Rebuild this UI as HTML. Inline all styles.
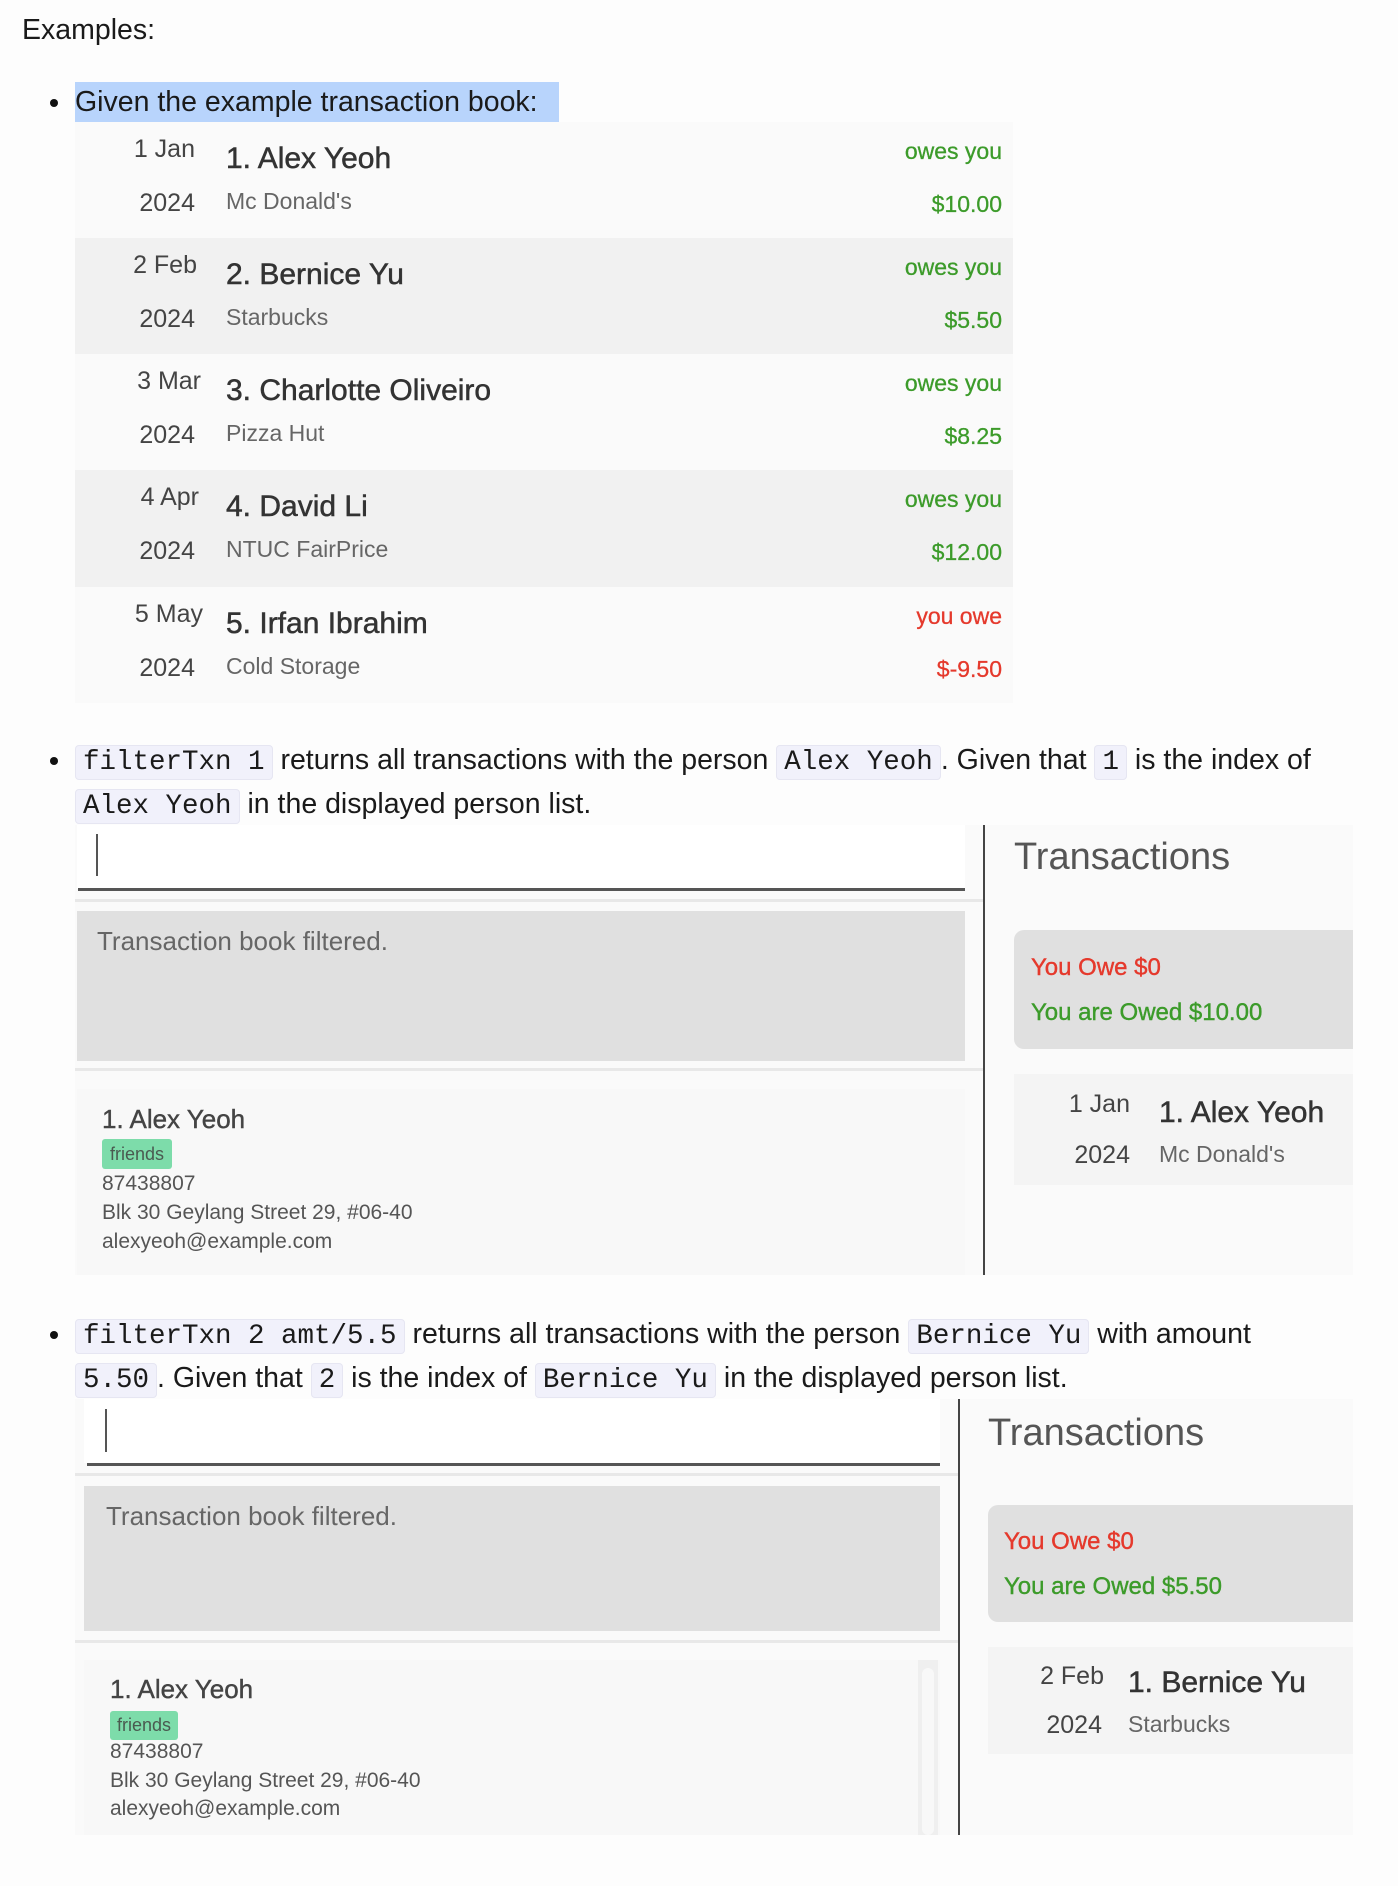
<!DOCTYPE html>
<html><head><meta charset="utf-8"><style>
*{margin:0;padding:0;box-sizing:border-box}
body{width:1398px;height:1886px;background:#fdfdfd;position:relative;font-family:"Liberation Sans",sans-serif;color:#1a1a1a;overflow:hidden}
.a{position:absolute;white-space:nowrap}
.p{font-size:28.5px;line-height:44px}
code{font-family:"Liberation Mono",monospace;font-size:27.5px;background:#f1f1fb;border:1px solid #e6e6f2;border-radius:4px;padding:1px 7px}
.dot{position:absolute;width:8px;height:8px;border-radius:50%;background:#111}
.g{color:#3c9b2a}.r{color:#e5392c}
.dt{position:absolute;right:0;width:120px;text-align:right;font-size:25px;color:#444}
.nm{font-size:30px;color:#333;-webkit-text-stroke:0.5px #333}
.ds{font-size:23px;color:#666}
.am{font-size:23px;-webkit-text-stroke:0.3px currentColor}
.pan{position:absolute;background:#fafafa}
.gb{position:absolute;background:#e0e0e0}
.ln{position:absolute;height:3px;background:#e8e8e8}
.tag{position:absolute;background:#7ddcaa;border-radius:3px;font-size:18px;color:#4a5a50;text-align:center}
.pi{font-size:21px;color:#555}
</style></head><body>
<div class="a p" style="left:22px;top:8px">Examples:</div>

<div class="dot" style="left:50px;top:99px"></div>
<div class="a" style="left:75px;top:82px;width:484px;height:40px;background:#b8d4fc"></div>
<div class="a p" style="left:75px;top:80px">Given the example transaction book:</div>

<div class="a" style="left:75px;top:122px;width:938px;height:581px;background:#fafafa"></div>
<div class="a" style="left:75px;top:238px;width:938px;height:116px;background:#f1f1f1"></div>
<div class="a" style="left:75px;top:470px;width:938px;height:117px;background:#f1f1f1"></div>

<div class="a dt" style="left:75px;width:120px;top:135px">1 Jan</div><div class="a dt" style="left:75px;width:120px;top:189px">2024</div>
<div class="a nm" style="left:226px;top:142px">1. Alex Yeoh</div><div class="a ds" style="left:226px;top:188px">Mc Donald's</div>
<div class="a am g" style="right:396px;top:138px">owes you</div><div class="a am g" style="right:396px;top:191px">$10.00</div>

<div class="a dt" style="left:75px;width:122px;top:251px">2 Feb</div><div class="a dt" style="left:75px;width:120px;top:305px">2024</div>
<div class="a nm" style="left:226px;top:258px">2. Bernice Yu</div><div class="a ds" style="left:226px;top:304px">Starbucks</div>
<div class="a am g" style="right:396px;top:254px">owes you</div><div class="a am g" style="right:396px;top:307px">$5.50</div>

<div class="a dt" style="left:75px;width:126px;top:367px">3 Mar</div><div class="a dt" style="left:75px;width:120px;top:421px">2024</div>
<div class="a nm" style="left:226px;top:374px">3. Charlotte Oliveiro</div><div class="a ds" style="left:226px;top:420px">Pizza Hut</div>
<div class="a am g" style="right:396px;top:370px">owes you</div><div class="a am g" style="right:396px;top:423px">$8.25</div>

<div class="a dt" style="left:75px;width:124px;top:483px">4 Apr</div><div class="a dt" style="left:75px;width:120px;top:537px">2024</div>
<div class="a nm" style="left:226px;top:490px">4. David Li</div><div class="a ds" style="left:226px;top:536px">NTUC FairPrice</div>
<div class="a am g" style="right:396px;top:486px">owes you</div><div class="a am g" style="right:396px;top:539px">$12.00</div>

<div class="a dt" style="left:75px;width:128px;top:600px">5 May</div><div class="a dt" style="left:75px;width:120px;top:654px">2024</div>
<div class="a nm" style="left:226px;top:607px">5. Irfan Ibrahim</div><div class="a ds" style="left:226px;top:653px">Cold Storage</div>
<div class="a am r" style="right:396px;top:603px">you owe</div><div class="a am r" style="right:396px;top:656px">$-9.50</div>

<div class="dot" style="left:50px;top:757px"></div>
<div class="a p" style="left:75px;top:738px"><code>filterTxn 1</code> returns all transactions with the person <code>Alex Yeoh</code>. Given that <code>1</code> is the index of</div>
<div class="a p" style="left:75px;top:782px"><code>Alex Yeoh</code> in the displayed person list.</div>

<div class="pan" style="left:75px;top:825px;width:1278px;height:450px"></div>
<div class="a" style="left:77px;top:825px;width:888px;height:64px;background:#fff"></div>
<div class="a" style="left:96px;top:834px;width:2px;height:42px;background:#555"></div>
<div class="a" style="left:78px;top:888px;width:887px;height:3px;background:#555"></div>
<div class="ln" style="left:75px;top:899px;width:910px"></div>
<div class="gb" style="left:77px;top:911px;width:888px;height:150px"></div>
<div class="a" style="left:97px;top:926px;font-size:26px;color:#666">Transaction book filtered.</div>
<div class="ln" style="left:75px;top:1068px;width:910px"></div>
<div class="a" style="left:77px;top:1089px;width:888px;height:186px;background:#f8f8f8"></div>
<div class="a" style="left:102px;top:1104px;font-size:26px;color:#444;-webkit-text-stroke:0.4px #444">1. Alex Yeoh</div>
<div class="tag" style="left:102px;top:1139px;width:70px;height:30px;line-height:30px">friends</div>
<div class="a pi" style="left:102px;top:1172px">87438807</div>
<div class="a pi" style="left:102px;top:1201px">Blk 30 Geylang Street 29, #06-40</div>
<div class="a pi" style="left:102px;top:1230px">alexyeoh@example.com</div>
<div class="a" style="left:983px;top:825px;width:2px;height:450px;background:#444"></div>
<div class="a" style="left:1014px;top:836px;font-size:38px;color:#555;font-weight:300">Transactions</div>
<div class="gb" style="left:1014px;top:930px;width:339px;height:119px;border-radius:10px 0 0 10px"></div>
<div class="a r" style="left:1031px;top:954px;font-size:24px;-webkit-text-stroke:0.4px currentColor">You Owe $0</div>
<div class="a g" style="left:1031px;top:999px;font-size:24px;-webkit-text-stroke:0.4px currentColor">You are Owed $10.00</div>
<div class="a" style="left:1014px;top:1074px;width:339px;height:111px;background:#f4f4f4"></div>
<div class="a dt" style="left:1010px;width:120px;top:1090px">1 Jan</div><div class="a dt" style="left:1010px;width:120px;top:1141px">2024</div>
<div class="a nm" style="left:1159px;top:1096px">1. Alex Yeoh</div><div class="a ds" style="left:1159px;top:1141px">Mc Donald's</div>

<div class="dot" style="left:50px;top:1331px"></div>
<div class="a p" style="left:75px;top:1312px"><code>filterTxn 2 amt/5.5</code> returns all transactions with the person <code>Bernice Yu</code> with amount</div>
<div class="a p" style="left:75px;top:1356px"><code>5.50</code>. Given that <code>2</code> is the index of <code>Bernice Yu</code> in the displayed person list.</div>

<div class="pan" style="left:75px;top:1399px;width:1278px;height:436px"></div>
<div class="a" style="left:84px;top:1399px;width:856px;height:64px;background:#fff"></div>
<div class="a" style="left:105px;top:1409px;width:2px;height:43px;background:#555"></div>
<div class="a" style="left:87px;top:1463px;width:853px;height:3px;background:#555"></div>
<div class="ln" style="left:75px;top:1473px;width:884px"></div>
<div class="gb" style="left:84px;top:1486px;width:856px;height:145px"></div>
<div class="a" style="left:106px;top:1501px;font-size:26px;color:#666">Transaction book filtered.</div>
<div class="ln" style="left:75px;top:1640px;width:884px"></div>
<div class="a" style="left:84px;top:1660px;width:856px;height:175px;background:#f8f8f8"></div>
<div class="a" style="left:918px;top:1660px;width:20px;height:175px;background:#efefef"></div>
<div class="a" style="left:922px;top:1668px;width:12px;height:167px;background:#f8f8f8;border-radius:6px"></div>
<div class="a" style="left:110px;top:1674px;font-size:26px;color:#444;-webkit-text-stroke:0.4px #444">1. Alex Yeoh</div>
<div class="tag" style="left:110px;top:1711px;width:68px;height:29px;line-height:29px">friends</div>
<div class="a pi" style="left:110px;top:1740px">87438807</div>
<div class="a pi" style="left:110px;top:1769px">Blk 30 Geylang Street 29, #06-40</div>
<div class="a pi" style="left:110px;top:1797px">alexyeoh@example.com</div>
<div class="a" style="left:958px;top:1399px;width:2px;height:436px;background:#444"></div>
<div class="a" style="left:988px;top:1412px;font-size:38px;color:#555;font-weight:300">Transactions</div>
<div class="gb" style="left:988px;top:1505px;width:365px;height:117px;border-radius:10px 0 0 10px"></div>
<div class="a r" style="left:1004px;top:1528px;font-size:24px;-webkit-text-stroke:0.4px currentColor">You Owe $0</div>
<div class="a g" style="left:1004px;top:1573px;font-size:24px;-webkit-text-stroke:0.4px currentColor">You are Owed $5.50</div>
<div class="a" style="left:988px;top:1647px;width:365px;height:107px;background:#f4f4f4"></div>
<div class="a dt" style="left:982px;width:122px;top:1662px">2 Feb</div><div class="a dt" style="left:982px;width:120px;top:1711px">2024</div>
<div class="a nm" style="left:1128px;top:1666px">1. Bernice Yu</div><div class="a ds" style="left:1128px;top:1711px">Starbucks</div>
</body></html>
